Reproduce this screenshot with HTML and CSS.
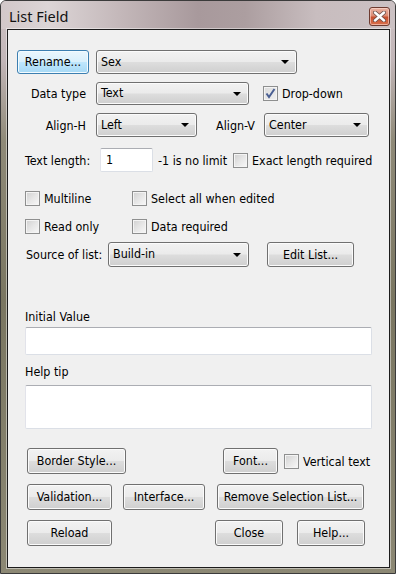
FILE: index.html
```html
<!DOCTYPE html>
<html lang="en">
<head>
    <meta charset="UTF-8">
    <title>List Field</title>
    <link rel="stylesheet" href="styles.css">
</head>
<body>
<div class="window">
    <div class="titlebar">
        <span class="title">List Field</span>
        <span class="close-btn">
            <svg width="13" height="11" viewBox="0 0 13 11">
                <path d="M2 1.5 L11 9.5 M11 1.5 L2 9.5" stroke="#6a4f4a" stroke-width="4" stroke-linecap="round"/>
                <path d="M2 1.5 L11 9.5 M11 1.5 L2 9.5" stroke="#fff" stroke-width="2.4" stroke-linecap="round"/>
            </svg>
        </span>
    </div>
    <div class="client">
        <div class="row row-1">
            <button class="btn focused w-rename">Rename...</button>
            <div class="combo w-name ml-7">Sex<span class="arrow"></span></div>
        </div>
        <div class="row row-2">
            <label class="side-label">Data type</label>
            <div class="combo w-type ml-7">Text<span class="arrow"></span></div>
            <span class="check checked ml-14"><svg width="11" height="11" viewBox="0 0 11 11"><path d="M1.5 5.5 L4 9 L9.5 1" fill="none" stroke="#4a5f93" stroke-width="2"/></svg></span>
            <span class="check-text">Drop-down</span>
        </div>
        <div class="row row-3">
            <label class="side-label">Align-H</label>
            <div class="combo w-alignh ml-7">Left<span class="arrow"></span></div>
            <label class="align-v-label">Align-V</label>
            <div class="combo w-alignv">Center<span class="arrow"></span></div>
        </div>
        <div class="row row-4">
            <label class="len-label">Text length:</label>
            <div class="textbox w-len">1</div>
            <span class="limit-text">-1 is no limit</span>
            <span class="check"></span>
            <span class="check-text">Exact length required</span>
        </div>
        <div class="row row-5">
            <div class="check-group"><span class="check"></span><span class="check-text">Multiline</span></div>
            <span class="check"></span><span class="check-text">Select all when edited</span>
        </div>
        <div class="row row-6">
            <div class="check-group"><span class="check"></span><span class="check-text">Read only</span></div>
            <span class="check"></span><span class="check-text">Data required</span>
        </div>
        <div class="row row-7">
            <label class="src-label">Source of list:</label>
            <div class="combo w-src">Build-in<span class="arrow"></span></div>
            <button class="btn w-edit ml-18">Edit List...</button>
        </div>

        <div class="field-label first">Initial Value</div>
        <div class="textbox wide initial"></div>
        <div class="field-label">Help tip</div>
        <div class="textbox wide tip"></div>

        <div class="row btn-row first">
            <button class="btn w-border">Border Style...</button>
            <button class="btn w-font ml-97">Font...</button>
            <span class="check ml-6"></span>
            <span class="check-text">Vertical text</span>
        </div>
        <div class="row btn-row">
            <button class="btn w-valid">Validation...</button>
            <button class="btn w-iface ml-11">Interface...</button>
            <button class="btn w-remove ml-12">Remove Selection List...</button>
        </div>
        <div class="row btn-row">
            <button class="btn w-valid">Reload</button>
            <button class="btn w-close ml-103">Close</button>
            <button class="btn w-close ml-14">Help...</button>
        </div>
    </div>
</div>
</body>
</html>
```

FILE: styles.css
```css
body {
    margin: 0;
    padding: 0;
    background: #fff;
    font-family: "DejaVu Sans Condensed", "DejaVu Sans", sans-serif;
    font-size: 12.4px;
    color: #000;
}
.window {
    width: 396px;
    height: 574px;
    box-sizing: border-box;
    border: 1px solid #3b3b3b;
    border-radius: 6px 6px 0 0;
    padding: 0 5px 5px 6px;
    background: linear-gradient(180deg, #cdc2c4 0px, #c2b6b8 60px, #8f8a78 140px, #7a7661 300px, #8c8874 574px);
}
.titlebar {
    height: 28px;
    margin: 0 -5px 0 -6px;
    padding: 0 6px 0 8px;
    display: flex;
    align-items: center;
    justify-content: space-between;
    border-radius: 5px 5px 0 0;
    background: linear-gradient(90deg, #d2c8c9 0%, #dcd5d6 12%, #c4b8ba 30%, #a8999c 50%, #ac9ea0 62%, #c8bdbf 80%, #cbc1c3 100%);
}
.title {
    font-family: "Noto Sans", "DejaVu Sans", sans-serif;
    font-size: 14.5px;
    color: #111;
    margin-top: 1px;
}
.close-btn {
    width: 19px;
    height: 17px;
    margin-top: 2px;
    margin-right: -1px;
    border: 1px solid #6e3b30;
    border-radius: 3px;
    background: linear-gradient(180deg, #eab4a4 0%, #dc8b73 45%, #c8502f 55%, #d7704c 100%);
    box-shadow: inset 0 0 0 1px rgba(255, 220, 210, 0.6);
    display: flex;
    align-items: center;
    justify-content: center;
}
.client {
    height: 539px;
    box-sizing: border-box;
    border: 1px solid #1c1c1c;
    background: #f0f0f0;
    box-shadow: 0 0 0 1px rgba(255, 255, 255, 0.45);
    padding: 20px 0 0 9px;
}
.row {
    display: flex;
    align-items: center;
}
.row-1 { height: 24px; }
.row-2 { height: 23px; margin-top: 8px; }
.row-3 { height: 24px; margin-top: 8px; }
.row-4 { height: 24px; margin-top: 11px; padding-left: 8px; }
.row-5 { height: 16px; margin-top: 18px; padding-left: 8px; }
.row-6 { height: 16px; margin-top: 12px; padding-left: 8px; }
.row-7 { height: 25px; margin-top: 8px; padding-left: 8px; }
.btn-row { height: 26px; margin-top: 10px; padding-left: 10px; }
.btn-row.first { margin-top: 19px; }

.ml-6 { margin-left: 6px; }
.ml-7 { margin-left: 7px; }
.ml-11 { margin-left: 11px; }
.ml-12 { margin-left: 12px; }
.ml-14 { margin-left: 14px; }
.ml-18 { margin-left: 18px; }
.ml-97 { margin-left: 97px; }
.ml-103 { margin-left: 103px; }

.btn {
    height: 100%;
    box-sizing: border-box;
    border: 1px solid #707070;
    border-radius: 3px;
    background: linear-gradient(180deg, #f2f2f2 0%, #ebebeb 48%, #dddddd 52%, #cfcfcf 100%);
    box-shadow: inset 0 0 0 1px #fbfbfb;
    font-family: inherit;
    font-size: inherit;
    color: #000;
    padding: 0 0 1px;
    text-align: center;
}
.btn.focused {
    border-color: #3c7fb1;
    background: linear-gradient(180deg, #eaf6fd 0%, #d9f0fc 48%, #bee6fd 52%, #a7d9f5 100%);
    box-shadow: inset 0 0 0 1px #f3fbff;
}
.combo {
    height: 100%;
    box-sizing: border-box;
    border: 1px solid #707070;
    border-radius: 3px;
    background: linear-gradient(180deg, #f2f2f2 0%, #ebebeb 48%, #dddddd 52%, #cfcfcf 100%);
    box-shadow: inset 0 0 0 1px #fbfbfb;
    display: flex;
    align-items: center;
    justify-content: space-between;
    padding: 0 7px 2px 4px;
}
.arrow {
    width: 0;
    height: 0;
    border-left: 4px solid transparent;
    border-right: 4px solid transparent;
    border-top: 4px solid #000;
    margin-top: 2px;
}
.w-rename { width: 72px; }
.w-name { width: 201px; }
.w-type { width: 153px; }
.w-alignh { width: 101px; }
.w-alignv { width: 105px; }
.w-src { width: 141px; }
.w-edit { width: 87px; }
.w-border { width: 99px; }
.w-font { width: 55px; }
.w-valid { width: 85px; }
.w-iface { width: 82px; }
.w-remove { width: 147px; }
.w-close { width: 68px; }

.side-label {
    width: 72px;
    text-align: right;
    padding-right: 3px;
    box-sizing: border-box;
}
.align-v-label {
    width: 67px;
    text-align: right;
    padding-right: 9px;
    box-sizing: border-box;
}
.len-label { width: 75px; }
.src-label { width: 83px; padding-left: 1px; box-sizing: border-box; }
.limit-text { width: 75px; margin-left: 5px; }

.check {
    width: 15px;
    height: 15px;
    box-sizing: border-box;
    flex: none;
    border: 1px solid #8e8f8f;
    background: linear-gradient(135deg, #d0d0d0 0%, #e6e6e6 50%, #f8f8f8 100%);
    box-shadow: inset 0 0 0 1px #f4f4f4;
    display: flex;
    align-items: center;
    justify-content: center;
}
.check.checked {
    background: linear-gradient(135deg, #dcdcdc 0%, #f0f0f0 100%);
}
.check-text {
    margin-left: 4px;
}
.check-group {
    width: 107px;
    display: flex;
    align-items: center;
}

.textbox {
    height: 100%;
    box-sizing: border-box;
    background: #fff;
    border: 1px solid #dbdfe6;
    border-top-color: #abadb3;
    border-left-color: #e2e3ea;
    border-radius: 2px;
    padding: 3px 0 0 5px;
}
.w-len { width: 53px; }
.field-label {
    margin: 10px 0 0 8px;
    height: 14px;
    line-height: 14px;
}
.field-label.first {
    margin-top: 43px;
}
.textbox.wide {
    width: 347px;
    margin-left: 8px;
}
.initial {
    height: 28px;
    margin-top: 3px;
}
.tip {
    height: 44px;
    margin-top: 6px;
}
```
